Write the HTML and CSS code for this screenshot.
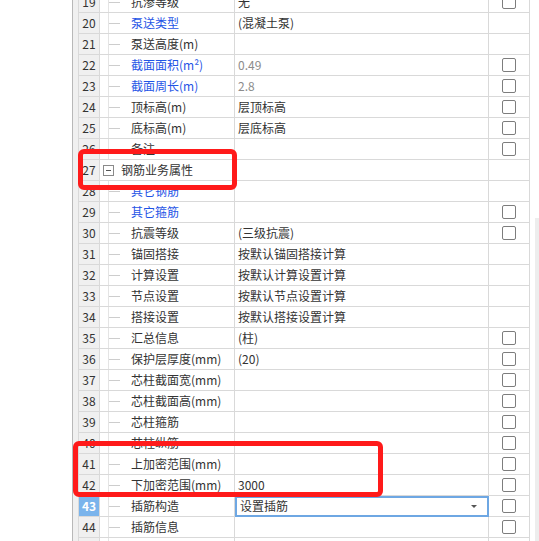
FILE: index.html
```html
<!DOCTYPE html>
<html lang="zh-CN">
<head>
    <meta charset="UTF-8">
    <title>属性列表</title>
    <link rel="stylesheet" href="styles.css">
</head>
<body>

<!-- Painel de propriedades -->
<div class="panel">
    <div class="gutter"></div>

    <div class="grid">
        <div class="row"><div class="num">19</div><div class="name">抗渗等级</div><div class="val">无</div><div class="chk"><span class="box"></span></div></div>
        <div class="row"><div class="num">20</div><div class="name blue">泵送类型</div><div class="val">(混凝土泵)</div><div class="chk"></div></div>
        <div class="row"><div class="num">21</div><div class="name">泵送高度(m)</div><div class="val"></div><div class="chk"></div></div>
        <div class="row"><div class="num">22</div><div class="name blue">截面面积(m²)</div><div class="val gray">0.49</div><div class="chk"><span class="box"></span></div></div>
        <div class="row"><div class="num">23</div><div class="name blue">截面周长(m)</div><div class="val gray">2.8</div><div class="chk"><span class="box"></span></div></div>
        <div class="row"><div class="num">24</div><div class="name">顶标高(m)</div><div class="val">层顶标高</div><div class="chk"><span class="box"></span></div></div>
        <div class="row"><div class="num">25</div><div class="name">底标高(m)</div><div class="val">层底标高</div><div class="chk"><span class="box"></span></div></div>
        <div class="row"><div class="num">26</div><div class="name">备注</div><div class="val"></div><div class="chk"><span class="box"></span></div></div>

        <!-- Grupo -->
        <div class="row"><div class="num">27</div><div class="group"><span class="toggle"></span>钢筋业务属性</div><div class="chk"></div></div>

        <div class="row"><div class="num">28</div><div class="name blue">其它钢筋</div><div class="val"></div><div class="chk"></div></div>
        <div class="row"><div class="num">29</div><div class="name blue">其它箍筋</div><div class="val"></div><div class="chk"><span class="box"></span></div></div>
        <div class="row"><div class="num">30</div><div class="name">抗震等级</div><div class="val">(三级抗震)</div><div class="chk"><span class="box"></span></div></div>
        <div class="row"><div class="num">31</div><div class="name">锚固搭接</div><div class="val">按默认锚固搭接计算</div><div class="chk"></div></div>
        <div class="row"><div class="num">32</div><div class="name">计算设置</div><div class="val">按默认计算设置计算</div><div class="chk"></div></div>
        <div class="row"><div class="num">33</div><div class="name">节点设置</div><div class="val">按默认节点设置计算</div><div class="chk"></div></div>
        <div class="row"><div class="num">34</div><div class="name">搭接设置</div><div class="val">按默认搭接设置计算</div><div class="chk"></div></div>
        <div class="row"><div class="num">35</div><div class="name">汇总信息</div><div class="val">(柱)</div><div class="chk"><span class="box"></span></div></div>
        <div class="row"><div class="num">36</div><div class="name">保护层厚度(mm)</div><div class="val">(20)</div><div class="chk"><span class="box"></span></div></div>
        <div class="row"><div class="num">37</div><div class="name">芯柱截面宽(mm)</div><div class="val"></div><div class="chk"><span class="box"></span></div></div>
        <div class="row"><div class="num">38</div><div class="name">芯柱截面高(mm)</div><div class="val"></div><div class="chk"><span class="box"></span></div></div>
        <div class="row"><div class="num">39</div><div class="name">芯柱箍筋</div><div class="val"></div><div class="chk"><span class="box"></span></div></div>
        <div class="row"><div class="num">40</div><div class="name">芯柱纵筋</div><div class="val"></div><div class="chk"><span class="box"></span></div></div>
        <div class="row"><div class="num">41</div><div class="name">上加密范围(mm)</div><div class="val"></div><div class="chk"><span class="box"></span></div></div>
        <div class="row"><div class="num">42</div><div class="name">下加密范围(mm)</div><div class="val">3000</div><div class="chk"><span class="box"></span></div></div>

        <!-- Linha selecionada -->
        <div class="row"><div class="num active">43</div><div class="name">插筋构造</div><div class="val editing"><span>设置插筋</span><span class="arrow"></span></div><div class="chk"><span class="box"></span></div></div>

        <div class="row"><div class="num">44</div><div class="name">插筋信息</div><div class="val"></div><div class="chk"><span class="box"></span></div></div>
        <div class="row"><div class="num">45</div><div class="name"></div><div class="val"></div><div class="chk"></div></div>
    </div>

    <div class="scrollbar"><div class="thumb"></div></div>
</div>

<!-- Marcações vermelhas -->
<div class="mark mark-a"></div>
<div class="mark mark-b"></div>

</body>
</html>
```

FILE: styles.css
```css
* {
    box-sizing: border-box;
}

body {
    margin: 0;
    background: #fff;
    font-family: "Noto Sans CJK SC", "Microsoft YaHei", sans-serif;
    font-size: 12px;
    color: #333;
    overflow: hidden;
}

/* Painel com a grelha */
.panel {
    display: flex;
    align-items: flex-start;
    margin: -8px 0 0 72px;
    border-left: 1px solid #b8b8b8;
}

.gutter {
    width: 5px;
    align-self: stretch;
    background: #f0f0f0;
}

.grid {
    border-left: 1px solid #d9d9d9;
}

.row {
    display: grid;
    grid-template-columns: 21px 135px 254px 41px;
    height: 21px;
}

.row > div {
    border-right: 1px solid #d9d9d9;
    border-bottom: 1px solid #d9d9d9;
    line-height: 20px;
    white-space: nowrap;
    overflow: hidden;
}

.num {
    background: #f0f0f0;
    text-align: center;
    color: #333;
}

.num.active {
    background: #7ab4ec;
    color: #fff;
    font-weight: bold;
}

/* Linhas da árvore */
.name {
    padding-left: 31px;
    background-image: linear-gradient(#e4e4e4, #e4e4e4), linear-gradient(#cdcdcd, #cdcdcd);
    background-size: 1px 100%, 12px 1px;
    background-position: 8px 0, 8px 10px;
    background-repeat: no-repeat;
}

.blue {
    color: #1f55e6;
}

.group {
    grid-column: 2 / 4;
    display: flex;
    align-items: center;
    gap: 7px;
    padding-left: 3px;
}

.toggle {
    width: 11px;
    height: 11px;
    border: 1px solid #8a8a8a;
    background: linear-gradient(#555, #555) center / 5px 1px no-repeat;
}

.val {
    padding-left: 3px;
}

.gray {
    color: #8c8c8c;
}

.val.editing {
    display: flex;
    justify-content: space-between;
    align-items: center;
    padding-left: 5px;
    padding-right: 11px;
    outline: 2px solid #6ea7e3;
    outline-offset: -2px;
}

.arrow {
    border-left: 3px solid transparent;
    border-right: 3px solid transparent;
    border-top: 3px solid #555;
}

.chk {
    display: flex;
    justify-content: center;
    align-items: center;
}

.box {
    width: 14px;
    height: 14px;
    border: 1px solid #7d7d7d;
    border-radius: 2px;
    background: #fff;
}

/* Barra de rolagem */
.scrollbar {
    width: 9px;
    padding-left: 5px;
}

.thumb {
    margin-top: 226px;
    height: 400px;
    background: #ededed;
}

/* Marcações sobre a grelha */
.mark {
    position: absolute;
    border: 5px solid #ff1a1a;
    border-radius: 6px;
}

.mark-a {
    left: 78px;
    top: 149px;
    width: 159px;
    height: 41px;
}

.mark-b {
    left: 73px;
    top: 441px;
    width: 310px;
    height: 56px;
}
```
